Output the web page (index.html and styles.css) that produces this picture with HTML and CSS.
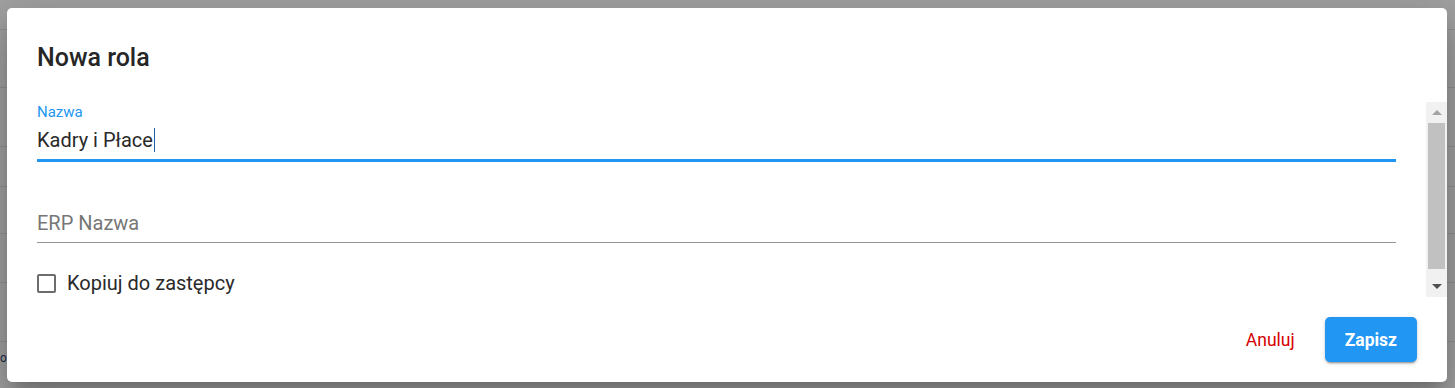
FILE: index.html
```html
<!DOCTYPE html>
<html lang="pl">
<head>
    <meta charset="UTF-8">
    <title>Nowa rola</title>
    <link rel="stylesheet" href="styles.css">
</head>
<body>

<!-- strona pod nakladka -->
<div class="page">
    <div class="row row-head"></div>
    <div class="row r58"></div>
    <div class="row r59"></div>
    <div class="row r40"></div>
    <div class="row r47"></div>
    <div class="row r49"></div>
    <div class="row r59"></div>
    <div class="row row-last"><span class="cut-text">o</span></div>
</div>

<div class="dialog">
    <div class="dialog-title">Nowa rola</div>

    <div class="dialog-body">
        <div class="dialog-content">
            <div class="field field-active">
                <div class="field-label">Nazwa</div>
                <div class="field-input">Kadry i Płace<span class="caret"></span></div>
            </div>

            <div class="field field-empty">
                <div class="field-input placeholder">ERP Nazwa</div>
            </div>

            <label class="check-row">
                <span class="check-box"></span>
                <span class="check-label">Kopiuj do zastępcy</span>
            </label>
        </div>

        <div class="scrollbar">
            <div class="scroll-btn"><span class="arrow-up"></span></div>
            <div class="scroll-track"><div class="scroll-thumb"></div></div>
            <div class="scroll-btn"><span class="arrow-down"></span></div>
        </div>
    </div>

    <div class="dialog-actions">
        <button class="btn btn-text">Anuluj</button>
        <button class="btn btn-primary">Zapisz</button>
    </div>
</div>

</body>
</html>
```

FILE: styles.css
```css
body {
    margin: 0;
    font-family: Roboto, "Liberation Sans", sans-serif;
    background-color: #a2a2a2;
    overflow: hidden;
    height: 388px;
}

/* tlo pod dialogiem */
.page {
    display: flex;
    flex-direction: column;
}

.row {
    border-bottom: 1px solid #929292;
}

.row-head { height: 29px; }
.r58 { height: 57px; }
.r59 { height: 58px; }
.r40 { height: 39px; }
.r47 { height: 46px; }
.r49 { height: 48px; }

.row-last {
    height: 40px;
    border-bottom: none;
    padding-top: 5px;
}

.cut-text {
    display: inline-block;
    font-size: 12px;
    color: #1c2b45;
}

/* dialog */
.dialog {
    position: absolute;
    left: 7px;
    top: 8px;
    width: 1440px;
    background-color: #fff;
    border-radius: 5px;
    box-shadow: 0px 11px 15px -7px rgba(0, 0, 0, 0.2), 0px 24px 38px 3px rgba(0, 0, 0, 0.14), 0px 9px 46px 8px rgba(0, 0, 0, 0.12);
    display: flex;
    flex-direction: column;
    overflow: hidden;
}

.dialog-title {
    padding: 30px 30px 24px;
    font-size: 25px;
    line-height: 40px;
    font-weight: 500;
    color: #262626;
}

.dialog-body {
    display: flex;
    height: 195px;
}

.dialog-content {
    flex: 1;
    padding: 1px 30px 0 30px;
}

.field {
    border-bottom: 1px solid #949494;
    padding-bottom: 4px;
}

.field-active {
    border-bottom: 3px solid #2196f3;
}

.field-empty {
    margin-top: 46px;
}

.field-label {
    font-size: 15px;
    line-height: 18px;
    color: #2196f3;
    margin-bottom: 4px;
}

.field-input {
    font-size: 20px;
    line-height: 30px;
    height: 30px;
    color: #2a2a2a;
}

.field-input.placeholder {
    color: #777;
}

.caret {
    display: inline-block;
    width: 1px;
    height: 24px;
    margin-left: 1px;
    vertical-align: -5px;
    background-color: #1f5fae;
}

.check-row {
    display: flex;
    align-items: center;
    gap: 11px;
    margin-top: 25px;
    height: 30px;
}

.check-box {
    width: 15px;
    height: 15px;
    border: 2px solid #6d6d6d;
    border-radius: 2px;
}

.check-label {
    font-size: 20px;
    line-height: 30px;
    color: #2a2a2a;
}

/* pasek przewijania */
.scrollbar {
    width: 21px;
    background-color: #f1f1f1;
    display: flex;
    flex-direction: column;
}

.scroll-btn {
    height: 21px;
    display: flex;
    align-items: center;
    justify-content: center;
}

.arrow-up {
    border-left: 5px solid transparent;
    border-right: 5px solid transparent;
    border-bottom: 5px solid #a3a3a3;
}

.arrow-down {
    border-left: 5px solid transparent;
    border-right: 5px solid transparent;
    border-top: 5px solid #505050;
}

.scroll-track {
    flex: 1;
    padding: 0 2px;
}

.scroll-thumb {
    height: 146px;
    background-color: #c1c1c1;
}

/* przyciski */
.dialog-actions {
    display: flex;
    justify-content: flex-end;
    align-items: center;
    gap: 10px;
    padding: 20px 30px 20px;
}

.btn {
    font-family: Roboto, "Liberation Sans", sans-serif;
    font-size: 17.5px;
    height: 45px;
    padding: 0 20px;
    border: none;
    border-radius: 5px;
    cursor: pointer;
}

.btn-text {
    background: transparent;
    color: #d50000;
    font-weight: 400;
}

.btn-primary {
    background-color: #2196f3;
    color: #fff;
    font-weight: 700;
    box-shadow: 0px 3px 1px -2px rgba(0, 0, 0, 0.2), 0px 2px 2px 0px rgba(0, 0, 0, 0.14), 0px 1px 5px 0px rgba(0, 0, 0, 0.12);
}
```
